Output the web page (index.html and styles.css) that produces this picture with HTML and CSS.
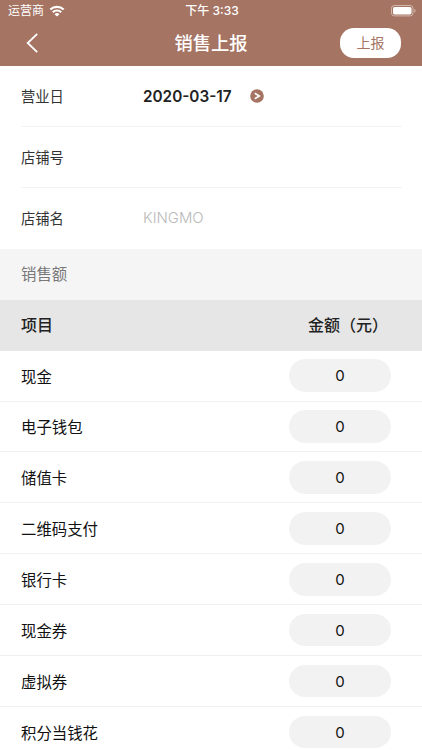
FILE: index.html
```html
<!DOCTYPE html>
<html lang="zh-CN">
<head>
  <meta charset="UTF-8">
  <meta name="viewport" content="width=device-width, initial-scale=1">
  <title>销售上报</title>
  <link rel="stylesheet" href="styles.css">
</head>
<body>
  <header class="header">
    <div class="status-bar">
      <div class="carrier">
        <span>运营商</span>
        <svg class="wifi" viewBox="0 0 16 12" width="16" height="12">
          <path d="M1.3 4.6a9.6 9.6 0 0 1 13.4 0" />
          <path d="M3.8 7.2a6 6 0 0 1 8.4 0" />
          <path class="dot" d="M8 11.6 5.5 9.2a3.6 3.6 0 0 1 5 0z" />
        </svg>
      </div>
      <span class="time">下午 3:33</span>
      <svg class="battery" viewBox="0 0 25 12" width="25" height="12">
        <rect class="shell" x="0.5" y="0.5" width="21.5" height="10.4" rx="2.8" />
        <rect class="level" x="2" y="2" width="18.5" height="7.4" rx="1.6" />
        <path class="cap" d="M23.3 4v3.6c.8-.3 1.3-1 1.3-1.8s-.5-1.5-1.3-1.8z" />
      </svg>
    </div>
    <nav class="nav">
      <a class="back" href="#">
        <svg viewBox="0 0 12 20" width="12" height="20"><path d="M11.2 .8 1.7 10l9.5 9.2" /></svg>
      </a>
      <h1>销售上报</h1>
      <button class="submit">上报</button>
    </nav>
  </header>

  <section class="form">
    <div class="field">
      <span class="label">营业日</span>
      <span class="date">2020-03-17</span>
      <svg class="more" viewBox="0 0 14 14" width="14" height="14">
        <circle cx="7" cy="7" r="6.8" />
        <path d="M4.8 4.2 9.3 7 4.8 9.8" />
      </svg>
    </div>
    <div class="field">
      <span class="label">店铺号</span>
    </div>
    <div class="field">
      <span class="label">店铺名</span>
      <span class="shop">KINGMO</span>
    </div>
  </section>

  <h2 class="section-title">销售额</h2>

  <div class="table-head">
    <span>项目</span>
    <span>金额（元）</span>
  </div>
  <ul class="items">
    <li><span>现金</span><span class="amount">0</span></li>
    <li><span>电子钱包</span><span class="amount">0</span></li>
    <li><span>储值卡</span><span class="amount">0</span></li>
    <li><span>二维码支付</span><span class="amount">0</span></li>
    <li><span>银行卡</span><span class="amount">0</span></li>
    <li><span>现金券</span><span class="amount">0</span></li>
    <li><span>虚拟券</span><span class="amount">0</span></li>
    <li><span>积分当钱花</span><span class="amount">0</span></li>
  </ul>
</body>
</html>
```

FILE: styles.css
```css
* {
  box-sizing: border-box;
}
body {
  margin: 0;
  height: 750px;
  overflow: hidden;
  background-color: #fff;
  color: #111;
  font-family: Inter, 'Noto Sans CJK SC', sans-serif;
}
.header {
  height: 65.5px;
  background-color: #a57463;
  color: #fff;
}
.status-bar {
  display: grid;
  grid-template-columns: 1fr auto 1fr;
  align-items: center;
  height: 22px;
  padding: 0 6px 0 8px;
  font-size: 12px;
  line-height: 22px;
}
.carrier {
  display: flex;
  align-items: center;
  gap: 5px;
}
.wifi path {
  fill: none;
  stroke: #fff;
  stroke-width: 2.1;
}
.wifi .dot {
  fill: #fff;
  stroke: none;
}
.time {
  font-weight: 500;
}
.battery {
  justify-self: end;
}
.battery .shell {
  fill: none;
  stroke: #d3b9b0;
}
.battery .level {
  fill: #fff;
}
.battery .cap {
  fill: #d3b9b0;
}
.nav {
  display: grid;
  grid-template-columns: 1fr auto 1fr;
  align-items: center;
  height: 42px;
  padding: 0 21px 0 26px;
}
.back {
  display: flex;
}
.back path {
  fill: none;
  stroke: #fff;
  stroke-width: 1.8;
}
h1 {
  margin: 0 0 0 -5px;
  font-size: 18.3px;
  font-weight: 500;
  line-height: 26px;
}
.submit {
  justify-self: end;
  width: 61px;
  height: 30px;
  padding: 0 0 2px;
  border: 0;
  border-radius: 14px;
  background-color: #fff;
  color: #a57463;
  font-family: inherit;
  font-size: 14px;
}
.form {
  padding: 0 20px 0 21px;
}
.field {
  display: flex;
  align-items: center;
  height: 61.2px;
  border-bottom: 1px solid #f4f2f2;
  font-size: 14.3px;
}
.field:last-child {
  padding-bottom: 1px;
  border-bottom: 0;
}
.label {
  width: 122px;
  color: #333;
}
.date {
  padding-top: 1px;
  color: #222;
  font-size: 15.3px;
  font-weight: 600;
}
.more {
  margin-left: 18px;
}
.more circle {
  fill: #a57463;
}
.more path {
  fill: none;
  stroke: #fff;
  stroke-width: 1.6;
}
.shop {
  padding-top: 1px;
  color: #b9b9b9;
  font-size: 14.9px;
  font-weight: 300;
}
.section-title {
  height: 51px;
  margin: 0;
  padding: 0 21px;
  background-color: #f5f5f5;
  color: #777;
  font-size: 15.4px;
  font-weight: 400;
  line-height: 51px;
}
.table-head {
  display: flex;
  justify-content: space-between;
  height: 50.5px;
  padding: 0 34px 0 21px;
  background-color: #e6e6e6;
  color: #222;
  font-size: 16px;
  font-weight: 500;
  line-height: 51px;
}
.items {
  margin: 0;
  padding: 0;
  list-style: none;
}
.items li {
  display: flex;
  justify-content: space-between;
  align-items: center;
  height: 50.95px;
  padding: 0 31px 0 21px;
  border-bottom: 1px solid #f0f0f0;
  font-size: 15.4px;
}
.amount {
  width: 102px;
  height: 32.5px;
  border-radius: 17px;
  background-color: #f2f2f2;
  font-size: 15px;
  line-height: 34px;
  text-align: center;
}
```
